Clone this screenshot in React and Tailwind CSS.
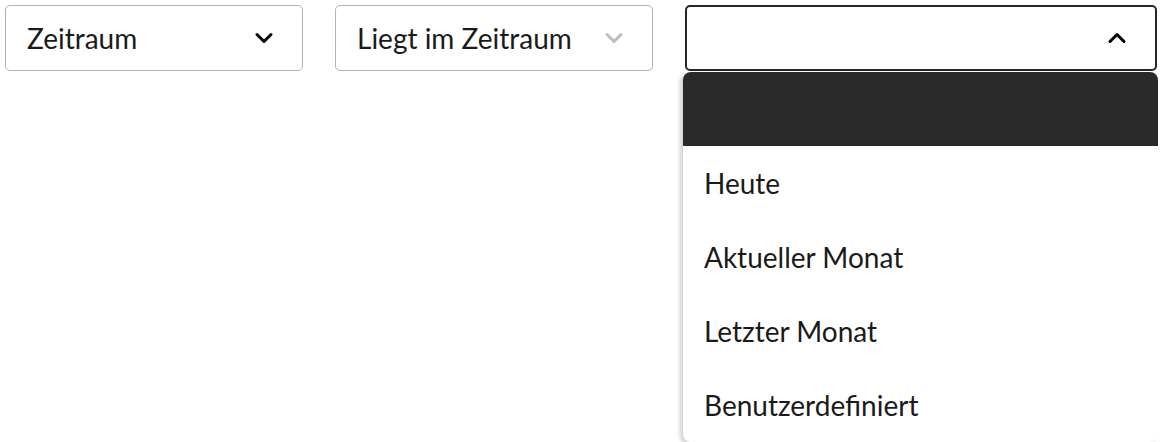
import { ChevronDown, ChevronUp } from "lucide-react";

const options = ["Heute", "Aktueller Monat", "Letzter Monat", "Benutzerdefiniert"];

const SelectBox = ({ label, width, muted }) => (
  <div
    className={`flex h-[66px] items-center justify-between rounded-[5px] border border-[#b3b3b3] bg-white pl-[21px] pr-[24px] ${width}`}
  >
    <span className="text-[28px] text-[#1a1a1a]">{label}</span>
    <ChevronDown
      className={`h-[28px] w-[28px] ${muted ? "text-[#bdbdbd]" : "text-black"}`}
      strokeWidth={2.6}
    />
  </div>
);

export default function App() {
  return (
    <div
      className="h-[442px] w-[1160px] overflow-hidden bg-white"
      style={{ fontFamily: "Lato, 'Noto Sans', sans-serif" }}
    >
      <div className="flex gap-[32px] pl-[5px] pt-[5px]">
        <SelectBox label="Zeitraum" width="w-[298px]" />
        <SelectBox label="Liegt im Zeitraum" width="w-[318px]" muted />
        <div className="relative">
          <div className="flex h-[66px] w-[472px] items-center justify-end rounded-[5px] border-2 border-[#262626] bg-white pr-[24px]">
            <ChevronUp className="h-[28px] w-[28px] text-black" strokeWidth={2.6} />
          </div>
          <div className="absolute left-[-2px] top-[67px] w-[475px] overflow-hidden rounded-[8px] bg-white shadow-[-3px_2px_4px_rgba(0,0,0,0.18)]">
            <div className="h-[74px] bg-[#2a2a2a]" />
            {options.map((o) => (
              <div key={o} className="flex h-[74px] items-center pl-[21px] text-[28px] text-[#1a1a1a]">
                {o}
              </div>
            ))}
          </div>
        </div>
      </div>
    </div>
  );
}
